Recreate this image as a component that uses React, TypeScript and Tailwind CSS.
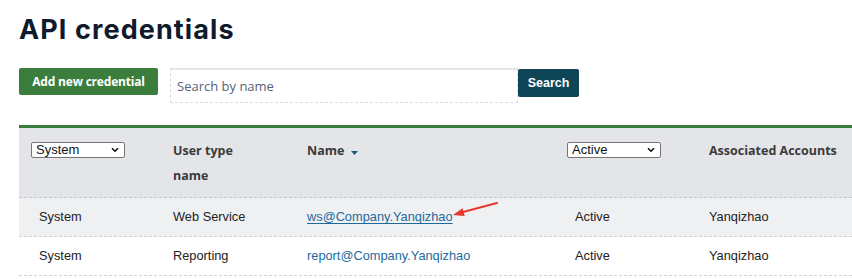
import React from "react";

const Chevron = () => (
  <svg width="8" height="6" viewBox="0 0 8 6" className="pointer-events-none absolute right-[6px] top-[5px]">
    <path d="M1 1.2 L4 4.2 L7 1.2" fill="none" stroke="#111" strokeWidth="1.6" />
  </svg>
);

const FakeSelect = ({ value }: { value: string }) => (
  <div className="relative h-[16px] w-[94px]">
    <select
      defaultValue={value}
      className="block h-[16px] w-full appearance-none rounded-[2px] border border-[#767676] bg-white pl-[4px] text-[13px] font-normal leading-[14px] text-[#111] font-['Liberation_Sans',Arial,sans-serif] outline-none"
    >
      <option>{value}</option>
    </select>
    <Chevron />
  </div>
);

const cellText = "text-[12.8px] text-[#222] font-['Liberation_Sans',Arial,sans-serif]";

export default function App() {
  return (
    <div className="h-[279px] w-[852px] overflow-hidden bg-white">
      <h1 className="pl-[19px] pt-[14px] text-[27px] font-bold leading-[32px] tracking-[1.1px] text-[#0f1b2d] font-['Inter',sans-serif]">
        API credentials
      </h1>
      <div className="mt-[22px] flex items-start pl-[19px]">
        <button className="h-[27px] w-[139px] rounded-[2px] bg-[#3a7d3c] text-[12px] font-bold tracking-[-0.2px] text-white font-['Open_Sans',sans-serif]">
          Add new credential
        </button>
        <input
          placeholder="Search by name"
          className="ml-[12px] h-[35px] w-[348px] border border-dashed border-[#dcdcdc] border-t-2 border-t-[#e6e6e6] bg-white px-[6px] text-[13px] text-[#333] placeholder:text-[#58627a] font-['Open_Sans',sans-serif] outline-none"
          style={{ borderTopStyle: "solid" }}
        />
        <button className="mt-[1px] h-[28px] w-[61px] rounded-[2px] bg-[#0e4557] text-[12.5px] font-bold text-white font-['Liberation_Sans',Arial,sans-serif]">
          Search
        </button>
      </div>
      <div className="ml-[19px] mt-[22px] border-t-[3px] border-[#3a7d3c]">
        <div className="grid h-[70px] grid-cols-[134px_134px_268px_134px_1fr] border-b border-dashed border-[#c8c9cc] bg-[#e4e5e8] pt-[10px] text-[12.5px] font-bold leading-[25px] text-[#3a3a3a] font-['Open_Sans',sans-serif]">
          <div className="pl-[12px] pt-[4px]">
            <FakeSelect value="System" />
          </div>
          <div className="w-[90px] pl-[20px]">User type name</div>
          <div className="flex items-start pl-[20px]">
            <span>Name</span>
            <svg width="7" height="4" viewBox="0 0 7 4" className="ml-[7px] mt-[13px]">
              <path d="M0 0 L7 0 L3.5 4 Z" fill="#1d5a73" />
            </svg>
          </div>
          <div className="pl-[12px] pt-[4px]">
            <FakeSelect value="Active" />
          </div>
          <div className="pl-[20px] whitespace-nowrap">Associated Accounts</div>
        </div>
        <div className={"relative grid h-[39px] grid-cols-[134px_134px_268px_134px_1fr] items-center border-b border-dashed border-[#d0d1d4] bg-[#eff0f2] " + cellText}>
          <div className="pl-[20px]">System</div>
          <div className="pl-[20px]">Web Service</div>
          <div className="pl-[20px]">
            <a href="#" className="text-[#1f6a9c] underline underline-offset-[2px]">ws@Company.Yanqizhao</a>
          </div>
          <div className="pl-[20px]">Active</div>
          <div className="pl-[20px]">Yanqizhao</div>
          <svg width="50" height="20" viewBox="0 0 50 20" className="pointer-events-none absolute left-[432px] top-[3px]">
            <path d="M12 11 L46 2" stroke="#e5392d" strokeWidth="2" fill="none" strokeLinecap="round" />
            <path d="M2 14 L13.7 15 L11.6 7.2 Z" fill="#e5392d" />
          </svg>
        </div>
        <div className={"grid h-[39px] grid-cols-[134px_134px_268px_134px_1fr] items-center border-b border-dashed border-[#d0d1d4] bg-white " + cellText}>
          <div className="pl-[20px]">System</div>
          <div className="pl-[20px]">Reporting</div>
          <div className="pl-[20px]">
            <a href="#" className="text-[#1f6a9c]">report@Company.Yanqizhao</a>
          </div>
          <div className="pl-[20px]">Active</div>
          <div className="pl-[20px]">Yanqizhao</div>
        </div>
      </div>
    </div>
  );
}
